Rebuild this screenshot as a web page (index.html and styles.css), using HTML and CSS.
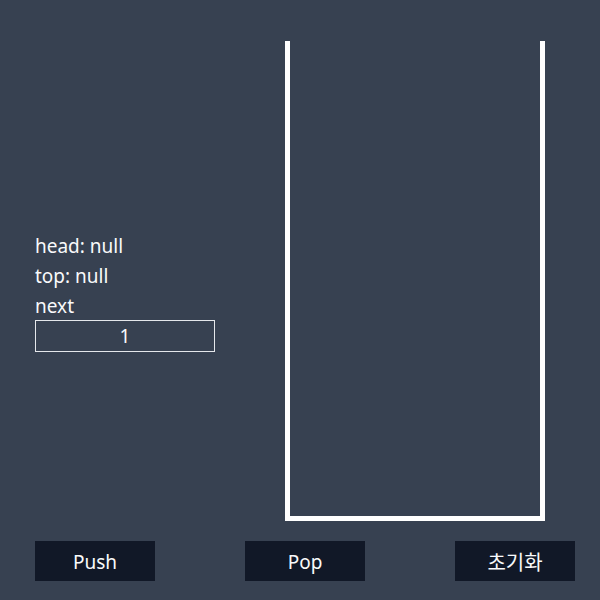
FILE: index.html
```html
<!DOCTYPE html>
<html lang="ko">
<head>
<meta charset="utf-8">
<link rel="stylesheet" href="styles.css">
</head>
<body>
<div class="app">
  <div class="top">
    <div class="info">
      <div class="line">head: null</div>
      <div class="line">top: null</div>
      <div class="line">next</div>
      <div class="node">1</div>
    </div>
    <div class="stack"></div>
  </div>
  <div class="controls">
    <button class="btn">Push</button>
    <button class="btn">Pop</button>
    <button class="btn btn-ko">초기화</button>
  </div>
</div>
</body>
</html>
```
FILE: styles.css
```css
html, body {
  margin: 0;
  padding: 0;
  background: #374151;
}
body {
  font-family: "Noto Sans", "Noto Sans CJK KR", sans-serif;
  color: #f9fafb;
  font-size: 19px;
}
.app {
  width: 600px;
  height: 600px;
  box-sizing: border-box;
  padding: 41px 25px 0 35px;
  display: flex;
  flex-direction: column;
}
.top {
  display: flex;
  height: 480px;
}
.info {
  width: 180px;
  display: flex;
  flex-direction: column;
  justify-content: center;
  padding-top: 20px;
  box-sizing: border-box;
}
.line {
  height: 30px;
  line-height: 32px;
  white-space: nowrap;
}
.node {
  height: 32px;
  box-sizing: border-box;
  border: 1px solid #e5e7eb;
  text-align: center;
  line-height: 31px;
}
.stack {
  margin-left: 70px;
  width: 260px;
  height: 480px;
  box-sizing: border-box;
  border: 5px solid #ffffff;
  border-top: none;
}
.controls {
  margin-top: 20px;
  display: flex;
  justify-content: space-between;
}
.btn {
  width: 120px;
  height: 40px;
  border: none;
  background: #111827;
  color: #f9fafb;
  font-family: "Noto Sans", "Noto Sans CJK KR", sans-serif;
  font-size: 19px;
  padding: 2px 0 0;
}
.btn-ko {
  font-size: 20px;
  padding: 0;
}
```
